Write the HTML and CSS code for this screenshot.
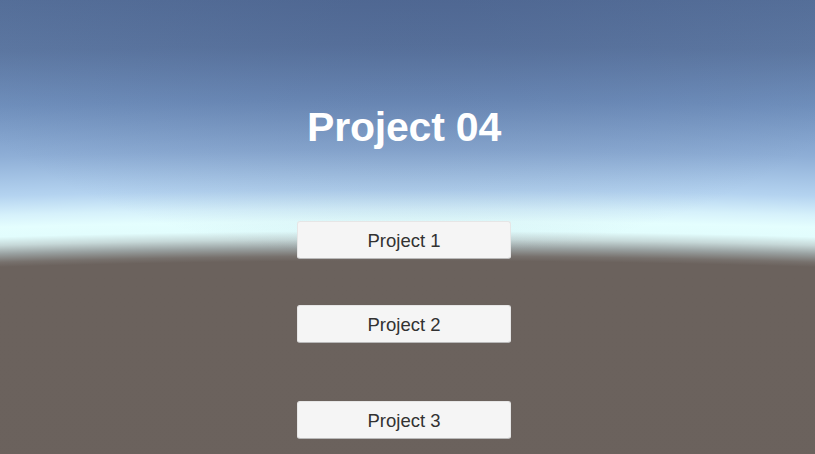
FILE: index.html
```html
<!DOCTYPE html>
<html lang="en">
<head>
<meta charset="utf-8">
<title>Project 04</title>
<link rel="stylesheet" href="styles.css">
</head>
<body>
<main class="scene">
  <h1 class="title">Project 04</h1>
  <nav class="menu">
    <button class="menu-btn menu-btn-1" type="button">Project 1</button>
    <button class="menu-btn menu-btn-2" type="button">Project 2</button>
    <button class="menu-btn menu-btn-3" type="button">Project 3</button>
  </nav>
</main>
</body>
</html>
```
FILE: styles.css
```css
html, body {
  margin: 0;
  padding: 0;
  width: 815px;
  height: 454px;
  overflow: hidden;
}

body {
  font-family: "Liberation Sans", Arial, sans-serif;
  background:
    radial-gradient(ellipse 520px 300px at 50% -40px, rgba(60, 80, 125, 0.35), rgba(60, 80, 125, 0) 100%),
    radial-gradient(ellipse 4000px 1200px at 50% 1450px,
      #6a615c 0%,
      #6b625d 99.1%,
      #77716d 99.5%,
      #9aa2a2 100.2%,
      #c6d8d8 100.9%,
      #e2fdfd 101.6%,
      #e4fefe 102.4%,
      #d6f1fb 103.4%,
      #b4d3f0 105%,
      #8eaed6 108.3%,
      #7090bd 112.5%,
      #5e79a3 117%,
      #56709a 121.5%);
}

.scene {
  box-sizing: border-box;
  width: 815px;
  height: 454px;
  padding-right: 7px;
  display: flex;
  flex-direction: column;
  align-items: center;
}

.title {
  margin: 104px 0 0;
  font-size: 41px;
  line-height: 47px;
  font-weight: 700;
  color: #ffffff;
  letter-spacing: -0.2px;
}

.menu {
  display: flex;
  flex-direction: column;
  align-items: center;
  margin-top: 70px;
}

.menu-btn {
  box-sizing: border-box;
  width: 214px;
  height: 38px;
  padding: 2px 0 0;
  display: flex;
  align-items: center;
  justify-content: center;
  background: #f5f5f5;
  border: 1px solid #e6e6e6;
  border-bottom-color: #b9b9b9;
  border-radius: 3px;
  font-family: "Liberation Sans", Arial, sans-serif;
  font-size: 18.5px;
  color: #323232;
}

.menu-btn-2 {
  margin-top: 46px;
}

.menu-btn-3 {
  margin-top: 58px;
}
```
